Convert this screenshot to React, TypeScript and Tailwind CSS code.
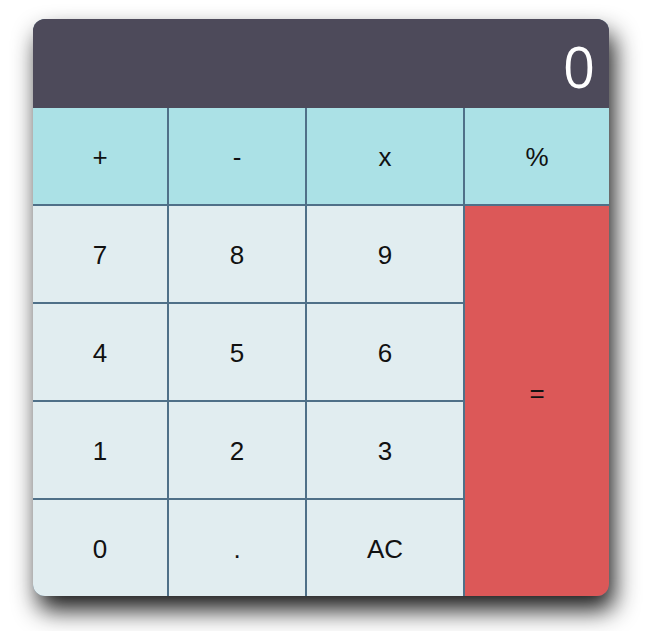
import React from 'react';

const ops = ['+', '-', 'x', '%'];
const nums = [
  ['7', '8', '9'],
  ['4', '5', '6'],
  ['1', '2', '3'],
  ['0', '.', 'AC'],
];

export default function App() {
  return (
    <div className="min-h-[631px] bg-white pt-[19px] pl-[33px]">
      <div className="w-[576px] overflow-hidden rounded-[12px] bg-[#4f7088] shadow-[5px_14px_24px_rgba(0,0,0,0.9)]">
        {/* display */}
        <div className="flex h-[89px] items-center justify-end bg-[#4d4a5a] pr-[14px] pt-[4px] text-[56px] leading-none text-white [font-family:'Open_Sans',sans-serif]">
          0
        </div>

        <div className="grid grid-cols-[134px_136px_156px_144px] grid-rows-[96px_96px_96px_96px_96px] gap-[2px] text-[26px] text-[#111] [font-family:'Liberation_Sans',Arial,sans-serif]">
          {ops.map((op) => (
            <button key={op} className="flex items-center justify-center bg-[#abe1e6] pt-[3px]">
              {op}
            </button>
          ))}
          {nums.map((row, i) => (
            <React.Fragment key={i}>
              {row.map((n) => (
                <button key={n} className="flex items-center justify-center bg-[#e1edf0] pt-[3px]">
                  {n}
                </button>
              ))}
              {i === 0 && (
                <button className="col-start-4 row-span-4 row-start-2 flex items-center justify-center bg-[#dc5858] pb-[15px]">
                  =
                </button>
              )}
            </React.Fragment>
          ))}
        </div>
      </div>
    </div>
  );
}
